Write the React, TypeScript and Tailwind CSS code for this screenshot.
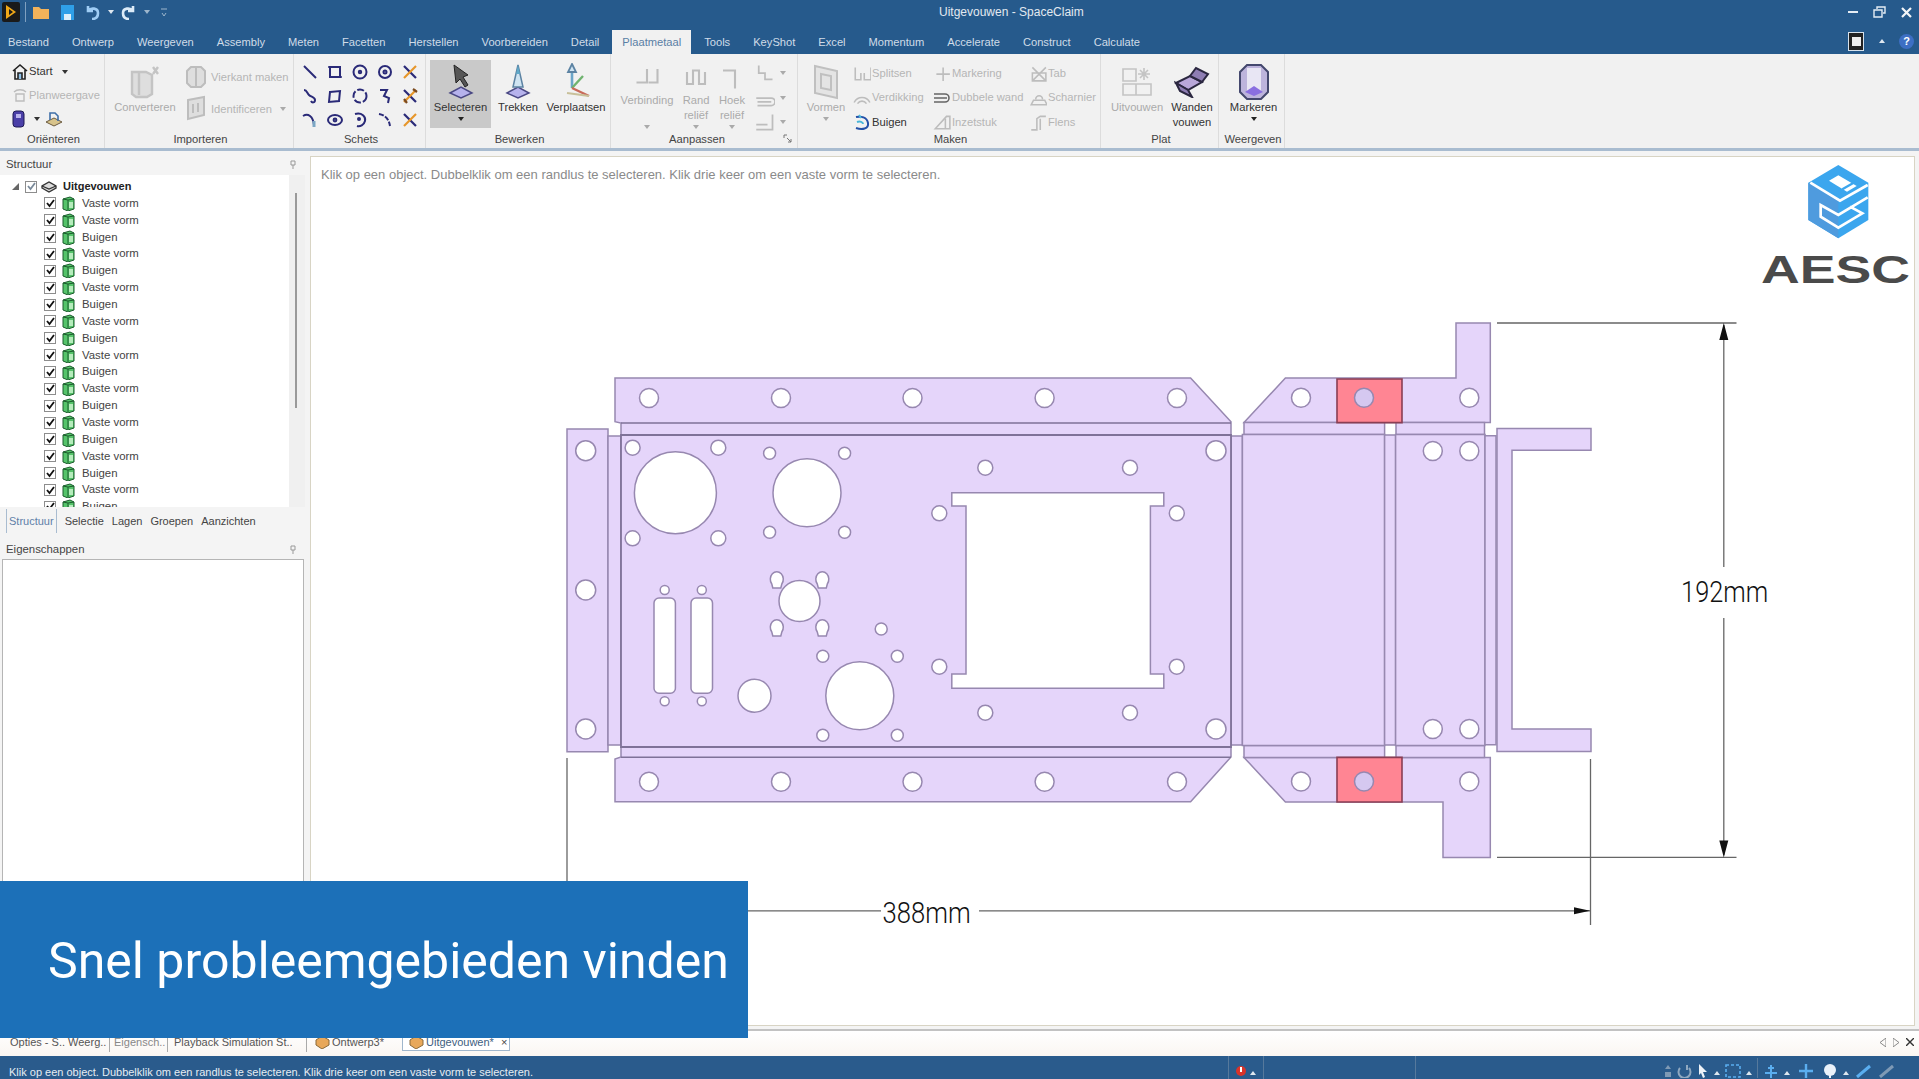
import React from "react";

const tabs = ["Bestand", "Ontwerp", "Weergeven", "Assembly", "Meten", "Facetten", "Herstellen", "Voorbereiden", "Detail", "Plaatmetaal", "Tools", "KeyShot", "Excel", "Momentum", "Accelerate", "Construct", "Calculate"];
const treeRows = ["Vaste vorm", "Vaste vorm", "Buigen", "Vaste vorm", "Buigen", "Vaste vorm", "Buigen", "Vaste vorm", "Buigen", "Vaste vorm", "Buigen", "Vaste vorm", "Buigen", "Vaste vorm", "Buigen", "Vaste vorm", "Buigen", "Vaste vorm", "Buigen"];

function Caret({ color = "#333", className = "" }: { color?: string; className?: string }) {
  return (
    <svg width="6" height="4" viewBox="0 0 6 4" className={className}>
      <path d="M0 0h6L3 4z" fill={color} />
    </svg>
  );
}

function Sketch({ children }: { children: React.ReactNode }) {
  return (
    <svg width="18" height="18" viewBox="0 0 18 18" fill="none" stroke="#2a2a78" strokeWidth="2">
      {children}
    </svg>
  );
}

function Cross({ dense = false }: { dense?: boolean }) {
  return (
    <svg width="18" height="18" viewBox="0 0 18 18" fill="none" strokeWidth="2.2">
      <path d="M3 3l12 12" stroke="#2a2a78" />
      <path d="M15 3L3 15" stroke="#e6962a" />
      {dense && <path d="M12 2l4 3M3 12l3 4" stroke="#7a4a20" />}
    </svg>
  );
}

const sketchIcons = [
  <Sketch><path d="M3 3l12 12" /></Sketch>,
  <Sketch><path d="M4 4h10v10H4z" /><path d="M2 4h3M13 14h3" strokeWidth="1.5" /></Sketch>,
  <Sketch><circle cx="9" cy="9" r="6.5" /><circle cx="9" cy="9" r="1.2" /></Sketch>,
  <Sketch><circle cx="9" cy="9" r="6" /><circle cx="9" cy="9" r="1.5" /></Sketch>,
  <Cross />,
  <Sketch><path d="M3 3c3 0 3 3 5 5s6 2 6 5-3 3-4 1" /></Sketch>,
  <Sketch><path d="M4 5l10-1-1 10-10 1z" /></Sketch>,
  <Sketch><circle cx="9" cy="9" r="6.5" strokeDasharray="7 2" /></Sketch>,
  <Sketch><path d="M4 3h7l-3 6 5 2-1 5" /></Sketch>,
  <Cross dense />,
  <Sketch><path d="M2 5c5-3 10 0 11 9" /><path d="M13 10v6" stroke="#7ca7c4" strokeWidth="3" /></Sketch>,
  <Sketch><ellipse cx="9" cy="9" rx="7" ry="5" /><circle cx="9" cy="9" r="1.4" /></Sketch>,
  <Sketch><path d="M4 3c7-2 11 3 10 7s-5 6-8 5" /><circle cx="8" cy="8" r="1" /></Sketch>,
  <Sketch><path d="M3 3c6 1 10 5 11 12" strokeDasharray="5 1.5" /></Sketch>,
  <Cross />,
];

function Plate() {
  return <path d="M8 30l11-6 11 6-11 5z" fill="#b6b2ec" stroke="#4a4884" strokeWidth="1.5" />;
}

function Big({ label, children, muted = false, caret = false, w, active = false, iconH = "h-[37px]" }: { label: React.ReactNode; children: React.ReactNode; muted?: boolean; caret?: boolean; w: string; active?: boolean; iconH?: string }) {
  return (
    <div className={`${w} ${active ? "bg-[#c9c9c9]" : ""} flex h-[68px] shrink-0 flex-col items-center pt-[3px] text-center leading-[15px] ${muted ? "text-[#ababab]" : "text-[#333]"}`}>
      <div className={`flex ${iconH} shrink-0 items-center justify-center`}>{children}</div>
      <div className="shrink-0">{label}</div>
      {caret && <Caret color={muted ? "#aaa" : "#222"} className="mt-[2px] shrink-0" />}
    </div>
  );
}

function Small({ icon, label, muted = true, w }: { icon: React.ReactNode; label: string; muted?: boolean; w: string }) {
  return (
    <div className={`${w} flex h-[24.5px] shrink-0 items-center gap-[1px] whitespace-nowrap ${muted ? "text-[#b5b5b5]" : "text-[#333]"}`}>
      {icon}
      <span>{label}</span>
    </div>
  );
}

function G({ children, s = 16 }: { children: React.ReactNode; s?: number }) {
  return (
    <svg width={s} height={s} viewBox="0 0 16 16" fill="none" stroke="#bdbdbd" strokeWidth="1.4" className="shrink-0">
      {children}
    </svg>
  );
}

function Group({ label, w, children, launcher = false }: { label: string; w: string; children: React.ReactNode; launcher?: boolean }) {
  return (
    <div className={`${w} relative flex shrink-0 flex-col border-r border-[#dcdcdc]`}>
      <div className="flex h-[76px] pt-[6px]">{children}</div>
      <div className={`${launcher ? "pr-[14px]" : "pl-[3px]"} pt-[2px] text-center leading-[14px] text-[#444]`}>{label}</div>
      {launcher && (
        <svg width="9" height="9" viewBox="0 0 9 9" className="absolute right-[5px] bottom-[5px]" fill="none" stroke="#777">
          <path d="M1 4V1h3M4 4l4 4M8 5v3H5" />
        </svg>
      )}
    </div>
  );
}

function Ribbon() {
  return (
    <div className="flex h-[94px] bg-[#f1f1f1] text-[11.2px]">
      <Group label="Oriënteren" w="w-[105px]">
        <div className="flex flex-col pl-[12px]">
          <div className="flex h-[23.5px] shrink-0 items-center gap-[1px] text-[#333]">
            <svg width="16" height="18" viewBox="0 0 16 18" fill="none" stroke="#222" strokeWidth="1.6">
              <path d="M1 8l7-6 7 6M3 7v9h10V7" />
              <path d="M6 16v-6h4v6" fill="#8fc1e8" />
            </svg>
            <span>Start</span>
            <Caret className="ml-[8px]" />
          </div>
          <div className="flex h-[23.5px] shrink-0 items-center gap-[1px] text-[#b5b5b5]">
            <G><path d="M2 5c3-3 9-3 12 0M4 7h8v7H4z" /></G>
            <span>Planweergave</span>
          </div>
          <div className="flex h-[23.5px] shrink-0 items-center">
            <svg width="13" height="18" viewBox="0 0 13 18">
              <rect x="1" y="1" width="11" height="16" rx="3" fill="#4a3fa8" stroke="#1e1a55" />
              <rect x="4" y="4" width="5" height="4" fill="#b9b3ec" />
            </svg>
            <Caret className="ml-[9px]" />
            <svg width="18" height="18" viewBox="0 0 18 18" className="ml-[5px]" fill="none">
              <path d="M1 12l8 4 8-4-8-4z" fill="#d8c48c" stroke="#6a5a40" />
              <path d="M5 10V3h5l3 3v5" stroke="#3f6fa8" strokeWidth="1.6" />
            </svg>
          </div>
        </div>
      </Group>
      <Group label="Importeren" w="w-[189px]">
        <div className="ml-[8px]">
          <Big label="Converteren" muted w="w-[64px]">
            <svg width="32" height="34" viewBox="0 0 32 34" fill="none" stroke="#c4c4c4" strokeWidth="2.4">
              <path d="M3 7h14l6 3v19l-5 3H7l-4-3z" fill="#dedede" />
              <path d="M10 8v22M24 2l5 7M29 2l-5 7" />
            </svg>
          </Big>
        </div>
        <div className="ml-[9px] flex flex-col">
          <div className="flex h-[35px] shrink-0 items-start gap-[5px] pt-[5px] text-[#b5b5b5]">
            <svg width="20" height="24" viewBox="0 0 20 24" fill="#dedede" stroke="#bdbdbd" strokeWidth="2"><path d="M5 2h10l4 4v12l-4 4H5l-4-4V6z" /><path d="M10 3v18" /></svg>
            <span className="pt-[4px]">Vierkant maken</span>
          </div>
          <div className="flex h-[30px] shrink-0 items-start gap-[5px] text-[#b5b5b5]">
            <svg width="20" height="26" viewBox="0 0 20 26" fill="#dedede" stroke="#bdbdbd" strokeWidth="2"><path d="M2 5l16-3v18L2 24z" /><path d="M7 9v9M12 8v9" /></svg>
            <span className="pt-[6px]">Identificeren</span>
            <Caret color="#aaa" className="mt-[12px] ml-[3px]" />
          </div>
        </div>
      </Group>
      <Group label="Schets" w="w-[132px]">
        <div className="grid grid-cols-[repeat(5,18px)] grid-rows-[repeat(3,24px)] gap-x-[7px] pl-[7px] place-items-center">
          {sketchIcons.map((icon, i) => (
            <div key={i}>{icon}</div>
          ))}
        </div>
      </Group>
      <Group label="Bewerken" w="w-[185px]">
        <div className="flex pl-[4px]">
          <Big label="Selecteren" caret active w="w-[61px]">
            <svg width="38" height="38" viewBox="0 0 38 38" fill="none">
              <Plate />
              <path d="M12 2l2 18 4-4 5 8 3-2-5-8 5-2z" fill="#555" stroke="#222" />
            </svg>
          </Big>
          <div className="ml-[4px]">
            <Big label="Trekken" w="w-[46px]">
              <svg width="38" height="38" viewBox="0 0 38 38" fill="none">
                <Plate />
                <path d="M19 2l5 22h-10z" fill="#cfe4f2" stroke="#5c83a3" strokeWidth="1.5" />
                <path d="M19 2l-2 9h4z" fill="#5fa9c9" />
              </svg>
            </Big>
          </div>
          <div className="ml-[4px]">
            <Big label="Verplaatsen" w="w-[62px]">
              <svg width="38" height="38" viewBox="0 0 38 38" fill="none" strokeWidth="1.8">
                <path d="M15 25V6" stroke="#6aa5c9" strokeWidth="2.6" />
                <path d="M15 1l4 8h-8z" fill="#cfe4f2" stroke="#5c83a3" />
                <path d="M15 25l11-12" stroke="#6fb36f" strokeWidth="2.4" />
                <path d="M15 25l17 8" stroke="#c86a5a" strokeWidth="2.4" />
                <path d="M10 30l22 3" stroke="#c8c09a" />
              </svg>
            </Big>
          </div>
        </div>
      </Group>
      <Group label="Aanpassen" w="w-[187px]" launcher>
        <div className="flex pl-[6px] text-[#ababab]">
          <Big label={<>Verbinding<br />&nbsp;</>} muted caret iconH="h-[30px]" w="w-[60px]">
            <G s={24}><path d="M8 2v9H1M9 11h6V2" /></G>
          </Big>
          <div className="ml-[1px]">
            <Big label={<>Rand<br />reliëf</>} muted caret iconH="h-[30px]" w="w-[36px]">
              <G s={24}><path d="M2 4v8h4V3h4v9h4V4" /></G>
            </Big>
          </div>
          <Big label={<>Hoek<br />reliëf</>} muted caret iconH="h-[30px]" w="w-[36px]">
            <G s={24}><path d="M2 3h8v12" /></G>
          </Big>
          <div className="ml-[5px] flex flex-col pt-[1px]">
            <div className="flex h-[24.5px] shrink-0 items-center gap-[5px]"><G s={20}><path d="M3 2v6h5v5h6" /></G><Caret color="#aaa" /></div>
            <div className="flex h-[24.5px] shrink-0 items-center gap-[5px]"><G s={20}><path d="M1 8h12a3 3 0 010 6H2M2 11h11" /></G><Caret color="#aaa" /></div>
            <div className="flex h-[24.5px] shrink-0 items-center gap-[5px]"><G s={20}><path d="M1 14h13V2M1 10h9" /></G><Caret color="#aaa" /></div>
          </div>
        </div>
      </Group>
      <Group label="Maken" w="w-[303px]">
        <div className="flex pl-[7px]">
          <Big label="Vormen" muted caret w="w-[42px]">
            <svg width="28" height="36" viewBox="0 0 28 36" fill="#e4e4e4" stroke="#c0c0c0" strokeWidth="2"><path d="M3 2l22 5v27L3 29z" /><path d="M9 10l10 2v14L9 24z" /></svg>
          </Big>
          <div className="ml-[6px] flex w-[80px] flex-col pt-[1px]">
            <Small w="w-full" label="Splitsen" icon={<G s={18}><path d="M2 3v11h5V8M10 8v6h6V3" /></G>} />
            <Small w="w-full" label="Verdikking" icon={<G s={18}><path d="M1 12c3-6 11-6 14 0M4 13c2-3 6-3 8 0" /></G>} />
            <Small w="w-full" muted={false} label="Buigen" icon={<svg width="18" height="18" viewBox="0 0 18 18" fill="none" stroke="#2450a8" strokeWidth="2"><path d="M3 4c5-1 11 0 12 6s-6 7-12 5" /><path d="M6 2l2 3M4 9c3-1 6 0 6 2" stroke="#49b6d9" /></svg>} />
          </div>
          <div className="flex w-[96px] flex-col pt-[1px]">
            <Small w="w-full" label="Markering" icon={<G s={18}><path d="M9 3v12M3 9h12" /></G>} />
            <Small w="w-full" label="Dubbele wand" icon={<svg width="18" height="18" viewBox="0 0 18 18" fill="none" stroke="#666" strokeWidth="1.6"><path d="M1 5h11a4 4 0 010 8H1M1 9h13" /></svg>} />
            <Small w="w-full" label="Inzetstuk" icon={<G s={18}><path d="M2 14L12 3h3v11z" /><path d="M11 5v9" /></G>} />
          </div>
          <div className="flex w-[72px] flex-col pt-[1px]">
            <Small w="w-full" label="Tab" icon={<G s={18}><path d="M3 3l12 12M15 3L3 15M3 8h12v7H3z" /></G>} />
            <Small w="w-full" label="Scharnier" icon={<G s={18}><path d="M2 14h14l-2-4H4zM6 9a3 3 0 016 0" /></G>} />
            <Small w="w-full" label="Flens" icon={<G s={18}><path d="M2 15h5V5l3-2h5M10 5v10" /></G>} />
          </div>
        </div>
      </Group>
      <Group label="Plat" w="w-[118px]">
        <div className="flex pl-[6px]">
          <Big label="Uitvouwen" muted w="w-[60px]">
            <svg width="34" height="34" viewBox="0 0 34 34" fill="none" stroke="#c4c4c4" strokeWidth="1.6">
              <path d="M3 4h13v12H3zM3 19h13v11H3zM16 19h15v11H16zM24 3v12M18 9h12M20 5l8 8M28 5l-8 8" />
            </svg>
          </Big>
          <Big label={<>Wanden<br />vouwen</>} w="w-[50px]">
            <svg width="36" height="32" viewBox="0 0 36 32" fill="#b9a7d9" stroke="#2b2740" strokeWidth="2">
              <path d="M2 17l14-7 12 6-14 8z" />
              <path d="M16 10L22 2l12 6-6 8zM2 17l4 8 12 6-4-7z" fill="#8e7db3" />
            </svg>
          </Big>
        </div>
      </Group>
      <Group label="Weergeven" w="w-[66px]">
        <div className="pl-[3px]">
          <Big label="Markeren" caret w="w-[63px]">
            <svg width="30" height="36" viewBox="0 0 30 36">
              <path d="M8 1h14l7 7v20l-7 7H8l-7-7V8z" fill="#bdb4dc" stroke="#44486e" strokeWidth="2" />
              <path d="M8 4h14v24H8z" fill="#e8e6f4" />
              <path d="M6 28l9-6 9 6-9 4z" fill="#8a6fe0" />
            </svg>
          </Big>
        </div>
      </Group>
    </div>
  );
}

function TitleBar() {
  return (
    <div className="flex h-[28px] items-center bg-[#265a8c] pb-[4px] text-[12px] text-[#e3e9f0]">
      <div className="flex w-[939px] shrink-0 items-center">
        <svg width="18" height="20" viewBox="0 0 18 20" className="ml-[2px]">
          <rect width="18" height="20" rx="2" fill="#1a1a1a" />
          <path d="M4 3l10 7-10 7z" fill="#f0a818" />
          <path d="M7 7l4 3-4 3z" fill="#1a1a1a" />
        </svg>
        <div className="ml-[5px] h-[20px] w-px bg-[#7fa0c0]" />
        <svg width="16" height="14" viewBox="0 0 16 14" className="ml-[7px]">
          <path d="M0 2h6l2 2h8v10H0z" fill="#f2b25a" />
        </svg>
        <svg width="13" height="15" viewBox="0 0 13 15" className="ml-[12px]">
          <rect width="13" height="15" fill="#2f9fe8" />
          <rect x="3" y="9" width="7" height="6" fill="#dceefa" />
        </svg>
        <svg width="16" height="16" viewBox="0 0 16 16" className="ml-[10px]" fill="none" stroke="#9fcdf5" strokeWidth="2.6">
          <path d="M4 2v5h5M4 7c3-4 10-3 10 2s-3 6-6 6" />
        </svg>
        <Caret color="#dfe8f0" className="ml-[8px]" />
        <svg width="16" height="16" viewBox="0 0 16 16" className="ml-[7px]" fill="none" stroke="#dcebf8" strokeWidth="2.6">
          <path d="M12 2v5H7M12 7C9 3 2 4 2 9s3 6 6 6" />
        </svg>
        <Caret color="#9db6cc" className="ml-[7px]" />
        <svg width="6" height="9" viewBox="0 0 6 9" className="ml-[11px]" fill="none" stroke="#9db6cc">
          <path d="M0 1h6M1 5l2 3 2-3" />
        </svg>
      </div>
      <span>Uitgevouwen - SpaceClaim</span>
      <div className="ml-auto flex items-center gap-[15px] pr-[7px]">
        <div className="h-[2px] w-[10px] bg-[#e5edf4]" />
        <svg width="13" height="12" viewBox="0 0 13 12" fill="none" stroke="#e5edf4" strokeWidth="1.4">
          <path d="M4 3V1h8v6h-2M1 4h8v7H1z" />
        </svg>
        <svg width="11" height="11" viewBox="0 0 11 11" stroke="#f2f5f8" strokeWidth="2.2">
          <path d="M1 1l9 9M10 1l-9 9" />
        </svg>
      </div>
    </div>
  );
}

function TabRow() {
  return (
    <div className="flex h-[26px] items-end bg-[#265a8c] pl-[8px] text-[11.15px] text-[#d0dce8]">
      <div className="flex items-end gap-[23px]">
        {tabs.map((t) =>
          t === "Plaatmetaal" ? (
            <div key={t} className="-mx-[10px] flex h-[24px] items-center bg-[#f1f1f1] px-[10px] text-[#5a7fa5]">
              {t}
            </div>
          ) : (
            <div key={t} className="flex h-[24px] items-center">
              {t}
            </div>
          )
        )}
      </div>
      <div className="ml-auto flex h-[26px] items-center gap-[14.5px] pr-[5px]">
        <div className="flex h-[19px] w-[16px] items-center justify-center border border-[#d7e2ec] bg-[#222]">
          <div className="h-[9px] w-[9px] bg-[#eee]" />
        </div>
        <Caret color="#dfe8f0" className="rotate-180" />
        <div className="flex h-[15px] w-[15px] items-center justify-center rounded-full bg-[#3d6fc4] text-[11px] font-bold text-white">?</div>
      </div>
    </div>
  );
}

function Check({ big = false }: { big?: boolean }) {
  return (
    <div className="flex h-[12px] w-[12px] shrink-0 items-center justify-center border border-[#8d8d8d] bg-white">
      <svg width="9" height="9" viewBox="0 0 9 9" fill="none" stroke={big ? "#7a8a9a" : "#111"} strokeWidth="1.8">
        <path d="M1 4l2.5 3L8 1" />
      </svg>
    </div>
  );
}

function Solid() {
  return (
    <svg width="13" height="15" viewBox="0 0 13 15" className="shrink-0">
      <path d="M1 3l7-2 4 2v10l-6 2-5-2z" fill="#55c46a" stroke="#1b5c2c" />
      <path d="M6 4v10M1 3l5 1 6-1" stroke="#1b5c2c" fill="none" />
      <path d="M7 6h4v6H7z" fill="#b6ecbc" />
    </svg>
  );
}

function LeftPanel() {
  return (
    <div className="flex w-[305px] shrink-0 flex-col bg-[#f4f4f4] text-[11.4px] text-[#444]">
      <div className="flex h-[24px] items-center justify-between pt-[3px] pr-[9px] pl-[6px]">
        <span>Structuur</span>
        <svg width="6" height="9" viewBox="0 0 6 9" fill="none" stroke="#999"><path d="M1 1h4v4H1zM3 5v4" /></svg>
      </div>
      <div className="flex h-[332px] overflow-hidden">
        <div className="flex-1 overflow-hidden bg-white pt-[3px]">
          <div className="flex h-[17px] items-center pl-[12px] font-bold text-[#222]">
            <svg width="7" height="7" viewBox="0 0 7 7" className="mr-[6px]"><path d="M7 0v7H0z" fill="#666" /></svg>
            <Check big />
            <svg width="16" height="12" viewBox="0 0 16 12" className="mr-[6px] ml-[4px]" fill="#ddd" stroke="#333" strokeWidth="1.3">
              <path d="M1 7l7 4 7-4v-2l-7-4-7 4z" />
              <path d="M1 5l7 3 7-3" fill="none" />
            </svg>
            <span className="text-[11px]">Uitgevouwen</span>
          </div>
          {treeRows.map((r, i) => (
            <div key={i} className="flex h-[16.87px] items-center pl-[44px]">
              <Check />
              <div className="ml-[6px]"><Solid /></div>
              <span className="ml-[7px]">{r}</span>
            </div>
          ))}
        </div>
        <div className="w-[16px] shrink-0 bg-[#f0f0f0] pt-[18px] pl-[6px]">
          <div className="h-[215px] w-[2px] bg-[#9a9a9a]" />
        </div>
      </div>
      <div className="flex h-[30px] items-center gap-[8px] pb-[2px] pl-[6px] text-[11px]">
        <div className="flex h-[24px] items-center border-x border-[#a9bcd0] px-[2px] text-[#6080a8]">Structuur</div>
        <span>Selectie</span>
        <span>Lagen</span>
        <span>Groepen</span>
        <span>Aanzichten</span>
      </div>
      <div className="flex h-[22px] items-center justify-between pt-[3px] pr-[9px] pl-[6px]">
        <span>Eigenschappen</span>
        <svg width="6" height="9" viewBox="0 0 6 9" fill="none" stroke="#999"><path d="M1 1h4v4H1zM3 5v4" /></svg>
      </div>
      <div className="mr-[1px] mb-[3px] ml-[2px] flex-1 border border-[#b5b5b5] bg-white" />
    </div>
  );
}

function Hole({ x, y, r = 9.5, fill = "#fff" }: { x: number; y: number; r?: number; fill?: string }) {
  return <circle cx={x} cy={y} r={r} fill={fill} stroke="#9788b0" strokeWidth="1.5" />;
}

function Bulb({ x, y }: { x: number; y: number }) {
  return (
    <path
      d={`M${x - 4} ${y + 10}h8l1-4a6.500 7.500 0 10-10 0z`}
      fill="#fff"
      stroke="#9788b0"
      strokeWidth="1.5"
    />
  );
}

function SheetDrawing() {
  const flangeX = [649, 781, 912.5, 1044.6, 1177];
  const pts: [number, number, number][] = [
    [585.7, 450.7, 10], [585.7, 590, 10], [585.7, 729, 10], [1216, 450.7, 10], [1216, 729, 10],
    [632.6, 447.7, 7.5], [718.3, 447.7, 7.5], [632.6, 538.3, 7.5], [718.3, 538.3, 7.5],
    [675.4, 492.7, 41], [807, 492.7, 34],
    [769.6, 453.3, 6], [844.6, 453.3, 6], [769.6, 532.3, 6], [844.6, 532.3, 6],
    [985.3, 467.7, 7.5], [1130, 467.7, 7.5], [985.3, 712.7, 7.5], [1130, 712.7, 7.5],
    [939.3, 513.3, 7.5], [1176.8, 513.3, 7.5], [939.3, 666.7, 7.5], [1176.8, 666.7, 7.5],
    [664.7, 590, 4.5], [701.8, 590, 4.5], [664.7, 701.3, 4.5], [701.8, 701.3, 4.5],
    [754.5, 695.7, 16.5], [859.8, 695.7, 34], [799.5, 601, 20.5],
    [822.8, 656.3, 6], [897.3, 656.3, 6], [822.8, 735.3, 6], [897.3, 735.3, 6], [881.2, 629, 6],
    [1432.8, 451, 9.5], [1469.3, 451, 9.5], [1432.8, 729, 9.5], [1469.3, 729, 9.5],
    [1301, 397.7, 9.5], [1469.3, 397.7, 9.5], [1301, 781.5, 9.5], [1469.3, 781.5, 9.5],
  ];
  return (
    <svg viewBox="311 157 1603 868" className="absolute inset-0 h-full w-full">
      <g fill="#e5d5fa" stroke="#9788b0" strokeWidth="1.5">
        <path d="M615 378H1190.6L1231 421.7V435H621V423L615 421.7Z" />
        <path d="M621 747H1231V757L1190.6 801.7H615V759L621 757Z" />
        <path d="M567 429H608V751.7H567Z" />
        <path d="M608 436H621V745H608Z" />
        <path d="M1231 436H1242.4V745H1231Z" />
        <path d="M1244 422.6L1285.4 378H1456V323H1490.3V422.6Z" />
        <path d="M1244 422.6H1384.6V434.5H1244Z" />
        <path d="M1396 422.6H1484.5V434.5H1396Z" />
        <path d="M1244 757.4L1285.4 802H1443V857.4H1490.3V757.4Z" />
        <path d="M1244 745.6H1384.6V757.4H1244Z" />
        <path d="M1396 745.6H1484.5V757.4H1396Z" />
        <path d="M1242.4 434.5H1384.6V745.6H1242.4Z" />
        <path d="M1384.6 435H1395.6V745H1384.6Z" />
        <path d="M1395.6 434.5H1485V745.6H1395.6Z" />
        <path d="M1485 435.7H1496V744.8H1485Z" />
        <path d="M1497 428.6H1591V450.3H1512V729H1591V751.5H1497Z" />
        <path d="M621 435H1231V747H621Z" stroke="#7f7298" strokeWidth="1.8" />
      </g>
      <path d="M621 423H1231M621 757.3H1231" stroke="#7f7298" strokeWidth="1.6" />
      <g fill="#ff8593" stroke="#8a3e54" strokeWidth="1.6">
        <path d="M1337 379H1402V422.6H1337Z" />
        <path d="M1337 757.4H1402V802H1337Z" />
      </g>
      {flangeX.map((x) => (
        <g key={x}>
          <Hole x={x} y={398} />
          <Hole x={x} y={781.7} />
        </g>
      ))}
      {pts.map(([x, y, r], i) => (
        <Hole key={i} x={x} y={y} r={r} />
      ))}
      <Hole x={1364} y={397.7} fill="#d5c8f0" />
      <Hole x={1364} y={781.5} fill="#d5c8f0" />
      <Bulb x={776.8} y={578} />
      <Bulb x={822.3} y={578} />
      <Bulb x={776.8} y={626} />
      <Bulb x={822.3} y={626} />
      <g fill="#fff" stroke="#9788b0" strokeWidth="1.5">
        <path d="M951.8 492.7H1163.8V506H1150.4V674H1163.8V688.3H951.8V674H966V506H951.8Z" />
        <rect x="654" y="598" width="21.4" height="95.3" rx="5" />
        <rect x="691" y="598" width="21.5" height="95.3" rx="5" />
      </g>
      <g stroke="#666" strokeWidth="1.3" fill="none">
        <path d="M1497 323H1736.5M1497 857.4H1736.5" />
        <path d="M1723.8 325V567M1723.8 618V855" />
        <path d="M567 758V890" />
        <path d="M1590.5 759V925" />
        <path d="M740 910.8H881M979 910.8H1590" />
      </g>
      <path d="M1723.8 323l-4.5 17h9zM1723.8 857.4l-4.5-17h9zM1590 910.8l-16-3.5v7z" fill="#111" />
      <g fontFamily="Roboto, sans-serif" fontSize="30" fontWeight="300" fill="#111">
        <text x="1724.6" y="602" textAnchor="middle" textLength="87" lengthAdjust="spacingAndGlyphs">192mm</text>
        <text x="926.6" y="923" textAnchor="middle" textLength="88" lengthAdjust="spacingAndGlyphs">388mm</text>
      </g>
    </svg>
  );
}

function Logo() {
  return (
    <svg viewBox="0 0 480 390" className="absolute top-[3px] right-[-1px] h-[130px] w-[160px]">
      <path d="M250 15L340 68V180L250 235L160 180V68Z" fill="#3ba6ee" />
      <path d="M160 68L250 122V235L160 180Z" fill="#4f9bde" />
      <path d="M166 68L255 122L338 75" fill="none" stroke="#fff" strokeWidth="8" />
      <path d="M222 62L250 46L305 78L276 95Z" fill="#fff" />
      <path d="M262 88L300 66" stroke="#3ba6ee" strokeWidth="7" />
      <path d="M338 112L250 165L197 135V170L250 203L322 160L285 140" fill="none" stroke="#fff" strokeWidth="8" />
      <text
        x="18"
        y="369"
        fontFamily="Liberation Sans, sans-serif"
        fontWeight="700"
        fontSize="116"
        fill="#4a4a4a"
        textLength="447"
        lengthAdjust="spacingAndGlyphs"
      >
        AESC
      </text>
    </svg>
  );
}

function Canvas() {
  return (
    <div className="flex-1 pt-[5px] pr-[4px] pb-[3px] pl-[5px]">
      <div className="relative h-full overflow-hidden border border-[#d8d4c4] bg-white">
        <div className="px-[10px] pt-[8px] font-['Liberation_Sans',sans-serif] text-[13px] text-[#8a8a8a]">
          Klik op een object. Dubbelklik om een randlus te selecteren. Klik drie keer om een vaste vorm te selecteren.
        </div>
        <SheetDrawing />
        <Logo />
      </div>
    </div>
  );
}

function BottomTabs() {
  return (
    <div className="flex h-[27px] items-center border-t-[2px] border-[#c2c2c2] bg-gradient-to-b from-white to-[#faf6f2] pb-[3px] text-[11px] text-[#555]">
      <div className="flex h-[20px] w-[110px] items-center overflow-hidden border-r border-[#aaa] pl-[10px] whitespace-nowrap">Opties - S.. Weerg..</div>
      <div className="flex h-[20px] w-[58px] items-center border-r border-[#aaa] pl-[4px] text-[#888]">Eigensch..</div>
      <div className="flex h-[20px] w-[139px] items-center border-r border-[#aaa] pl-[6px] whitespace-nowrap">Playback Simulation St..</div>
      <div className="ml-[8px] flex w-[87px] items-center gap-[2px]">
        <svg width="15" height="14" viewBox="0 0 15 14"><path d="M1 5l6-4 7 4v5l-7 4-6-4z" fill="#e8a85a" stroke="#8a6a3a" /></svg>
        <span>Ontwerp3*</span>
      </div>
      <div className="flex h-[18px] w-[108px] items-center gap-[2px] border border-[#9fb6cc] bg-white pl-[6px] text-[#40607f]">
        <svg width="15" height="14" viewBox="0 0 15 14"><path d="M1 5l6-4 7 4v5l-7 4-6-4z" fill="#e8a85a" stroke="#8a6a3a" /></svg>
        <span className="whitespace-nowrap">Uitgevouwen*</span>
        <span className="ml-[5px] text-[#444]">×</span>
      </div>
      <div className="ml-auto flex items-center gap-[7px] pr-[5px] text-[#555]">
        <svg width="6" height="9" viewBox="0 0 6 9"><path d="M6 0v9L0 4.500z" fill="none" stroke="#888" /></svg>
        <svg width="6" height="9" viewBox="0 0 6 9"><path d="M0 0v9L6 4.500z" fill="none" stroke="#888" /></svg>
        <svg width="8" height="8" viewBox="0 0 8 8" stroke="#333" strokeWidth="1.4"><path d="M0 0l8 8M8 0L0 8" /></svg>
      </div>
    </div>
  );
}

function StatusBar() {
  return (
    <div className="flex h-[23px] items-end bg-[#2a5b8c] text-[11px] text-[#e6edf3]">
      <span className="w-[1228px] shrink-0 pl-[9px] leading-[13px]">Klik op een object. Dubbelklik om een randlus te selecteren. Klik drie keer om een vaste vorm te selecteren.</span>
      <div className="flex h-[23px] w-[36px] items-end gap-[4px] border-x border-[#56799c] pb-[1px] pl-[7px]">
        <svg width="10" height="14" viewBox="0 0 10 14"><circle cx="5" cy="7" r="5" fill="#d9332a" /><rect x="4" y="3" width="2" height="5" fill="#fff" /></svg>
        <Caret color="#dfe8f0" className="mb-[3px] rotate-180" />
      </div>
      <div className="h-[23px] w-[152px] border-r border-[#56799c]" />
      <div className="ml-auto flex items-end gap-[5px] pr-[24px] pb-[1px]">
        <svg width="8" height="14" viewBox="0 0 8 14" fill="#7f9ab5"><path d="M4 1l3 4H1zM1 8h6v5H1z" /></svg>
        <svg width="16" height="14" viewBox="0 0 16 14" fill="none" stroke="#8fa8c0" strokeWidth="2"><path d="M3 4a6 6 0 109 0M10 1v5" /></svg>
        <svg width="11" height="14" viewBox="0 0 11 14"><path d="M1 0l8 8H5l2 5-2 1-2-5-2 2z" fill="#eef3f8" /></svg>
        <Caret color="#dfe8f0" className="mb-[3px] rotate-180" />
        <svg width="16" height="14" viewBox="0 0 16 14" fill="none" stroke="#5aaef0" strokeWidth="1.6" strokeDasharray="3 2"><rect x="1" y="1" width="14" height="12" /></svg>
        <Caret color="#dfe8f0" className="mb-[3px] rotate-180" />
        <div className="h-[20px] w-px bg-[#56799c]" />
        <svg width="16" height="14" viewBox="0 0 16 14" fill="none" stroke="#5aaef0" strokeWidth="2"><path d="M8 1v13M2 9h12M5 4h6" /></svg>
        <Caret color="#dfe8f0" className="mb-[3px] rotate-180" />
        <svg width="16" height="14" viewBox="0 0 16 14" fill="none" stroke="#5aaef0" strokeWidth="2.4" className="ml-[3px]"><path d="M8 0v14M1 7h14" /></svg>
        <svg width="16" height="14" viewBox="0 0 16 14" className="ml-[3px]"><circle cx="8" cy="6" r="6" fill="#eaf2fa" /><rect x="7" y="11" width="2" height="3" fill="#eaf2fa" /></svg>
        <Caret color="#dfe8f0" className="mb-[3px] rotate-180" />
        <svg width="16" height="14" viewBox="0 0 16 14" fill="none" stroke="#5aaef0" strokeWidth="3" className="ml-[2px]"><path d="M1 13L14 2" /></svg>
        <svg width="16" height="14" viewBox="0 0 16 14" fill="none" stroke="#7f9ab5" strokeWidth="3" className="ml-[2px]"><path d="M1 13L14 2" /></svg>
      </div>
    </div>
  );
}

export default function App() {
  return (
    <div className="relative flex h-screen w-full flex-col overflow-hidden bg-white font-['Liberation_Sans',sans-serif]">
      <TitleBar />
      <TabRow />
      <Ribbon />
      <div className="h-[3px] bg-[#a9bcd0]" />
      <div className="flex min-h-0 flex-1 bg-[#f4f4f4]">
        <LeftPanel />
        <Canvas />
      </div>
      <BottomTabs />
      <StatusBar />
      <div className="absolute top-[881px] left-0 flex h-[157px] w-[748px] items-center bg-[#1c70b8] pt-[4px] pl-[48px] font-['Roboto',sans-serif] text-[50px] whitespace-nowrap text-white">
        Snel probleemgebieden vinden
      </div>
    </div>
  );
}
